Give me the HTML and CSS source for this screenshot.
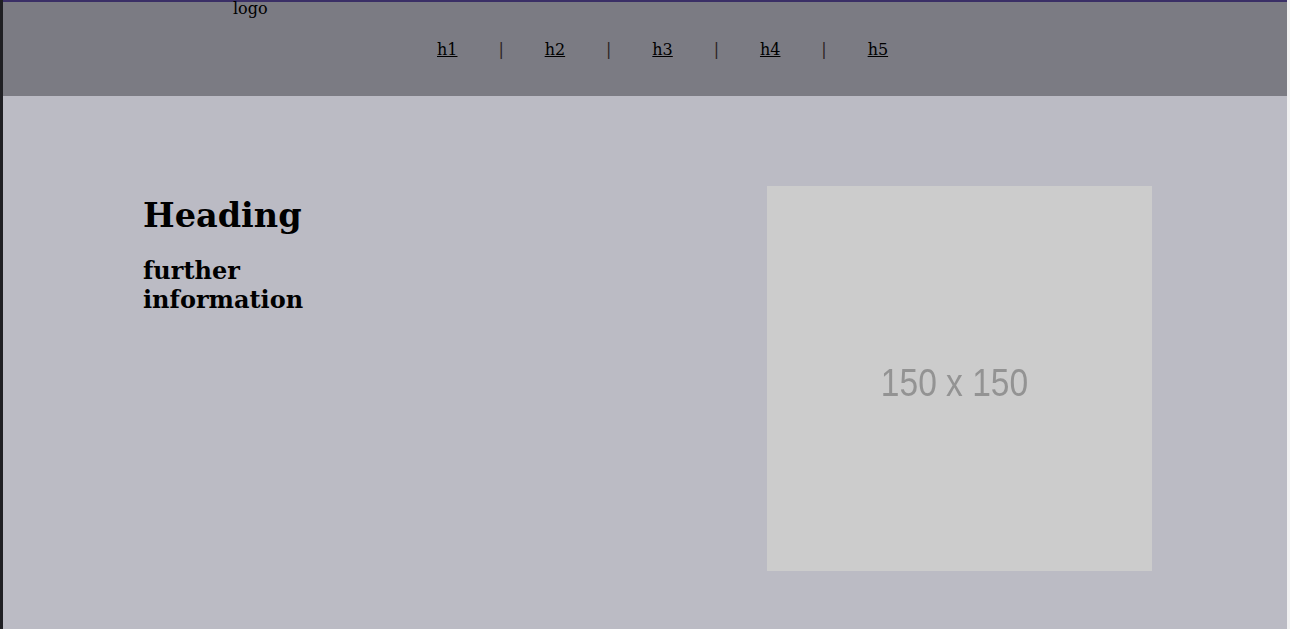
FILE: index.html
```html
<!DOCTYPE html>
<html>
<head>
<meta charset="utf-8">
<title>Page</title>
<link rel="stylesheet" href="styles.css">
</head>
<body>
<div class="page">
  <header class="header">
    <div class="logo">logo</div>
    <nav class="nav">
      <a href="#">h1</a><span class="sep">|</span>
      <a href="#">h2</a><span class="sep">|</span>
      <a href="#">h3</a><span class="sep">|</span>
      <a href="#">h4</a><span class="sep">|</span>
      <a href="#">h5</a>
    </nav>
  </header>
  <main class="main">
    <div class="intro">
      <h1 class="title">Heading</h1>
      <h2 class="subtitle">further information</h2>
    </div>
    <div class="placeholder"><span class="placeholder-text">150 x 150</span></div>
  </main>
</div>
</body>
</html>
```
FILE: styles.css
```css
html, body {
  margin: 0;
  padding: 0;
  height: 100%;
}
body {
  background: #f2f2f2;
  font-family: "DejaVu Serif", serif;
  font-size: 16px;
  color: #000;
}
.page {
  box-sizing: border-box;
  height: 629px;
  width: 1287px;
  border-left: 3px solid #1f1f23;
  display: flex;
  flex-direction: column;
  overflow: hidden;
}
.header {
  height: 96px;
  box-sizing: border-box;
  background: #7b7b83;
  border-top: 2px solid #3a2f66;
  flex: none;
}
.logo {
  padding-left: 230px;
  line-height: 16px;
  margin-top: -1px;
}
.nav {
  display: flex;
  gap: 40.9px;
  padding-left: 434px;
  margin-top: 24px;
  line-height: 18px;
}
.nav a {
  color: #000;
  text-decoration: underline;
}
.sep {
  color: #2b2222;
}
.main {
  flex: 1;
  background: #bbbbc4;
  display: flex;
  justify-content: space-between;
  align-items: flex-start;
  padding: 90px 135px 0 140px;
}
.intro {
  width: min-content;
}
.title {
  font-size: 33.5px;
  font-weight: bold;
  margin: 10px 0 21px;
}
.subtitle {
  font-size: 24px;
  font-weight: bold;
  margin: 0;
  line-height: 29px;
}
.placeholder {
  width: 385px;
  height: 385px;
  background: #cccccc;
  display: flex;
  align-items: center;
  justify-content: center;
  flex: none;
}
.placeholder-text {
  font-family: "Liberation Sans", Arial, sans-serif;
  font-size: 39px;
  color: #939393;
  transform: scaleX(0.86) translate(-6px, 4px);
  filter: blur(0.6px);
  white-space: nowrap;
}
```
